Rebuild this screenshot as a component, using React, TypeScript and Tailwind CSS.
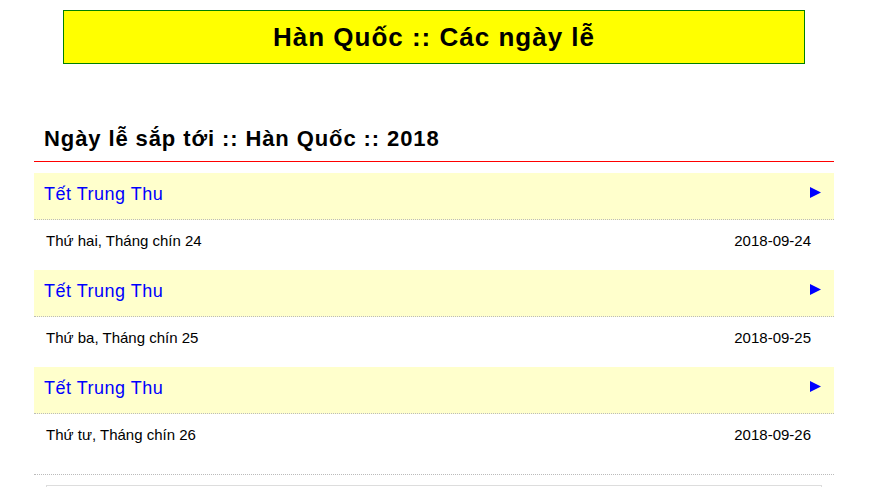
const holidays = [
  { name: 'Tết Trung Thu', day: 'Thứ hai, Tháng chín 24', date: '2018-09-24' },
  { name: 'Tết Trung Thu', day: 'Thứ ba, Tháng chín 25', date: '2018-09-25' },
  { name: 'Tết Trung Thu', day: 'Thứ tư, Tháng chín 26', date: '2018-09-26' },
];

export default function App() {
  return (
    <div className="min-h-screen bg-white font-['Liberation_Sans',Arial,sans-serif] text-black">
      {/* Title banner */}
      <div className="pt-[10px] pl-[63px]">
        <div className="w-[742px] h-[54px] border border-[#008000] bg-[#ffff00] flex items-center justify-center">
          <h1 className="text-[26px] leading-[30px] font-bold tracking-[1px]">Hàn Quốc :: Các ngày lễ</h1>
        </div>
      </div>

      <div className="ml-[34px] w-[800px]">
        <h2 className="mt-[62px] pl-[10px] pb-[9px] text-[22px] leading-[26px] font-bold tracking-[0.9px]">
          Ngày lễ sắp tới :: Hàn Quốc :: 2018
        </h2>
        <div className="h-px bg-[#ff0000]" />

        <div className="mt-[11px] pb-[10px] border-b border-dotted border-[#bbbbbb]">
          {holidays.map((h, i) => (
            <div key={i}>
              <div className="h-[47px] bg-[#ffffcc] border-b border-dotted border-[#bbbbbb] pt-[10px] pl-[10px] pr-[13px] flex items-start justify-between">
                <span className="text-[18px] leading-[22px] tracking-[0.5px] text-[#0000ff]">{h.name}</span>
                <div className="h-[22px] flex items-center">
                  <svg width="11" height="11" viewBox="0 0 11 11" className="-mt-[4px]">
                    <polygon points="0,0 11,5.5 0,11" fill="#0000ff" />
                  </svg>
                </div>
              </div>
              <div className="h-[50px] pt-[12px] pl-[12px] pr-[23px] flex items-start justify-between text-[15px] leading-[18px]">
                <span>{h.day}</span>
                <span>{h.date}</span>
              </div>
            </div>
          ))}
        </div>

        <div className="mt-[10px] mx-[12px] h-[60px] border border-[#dddddd]" />
      </div>
    </div>
  );
}
